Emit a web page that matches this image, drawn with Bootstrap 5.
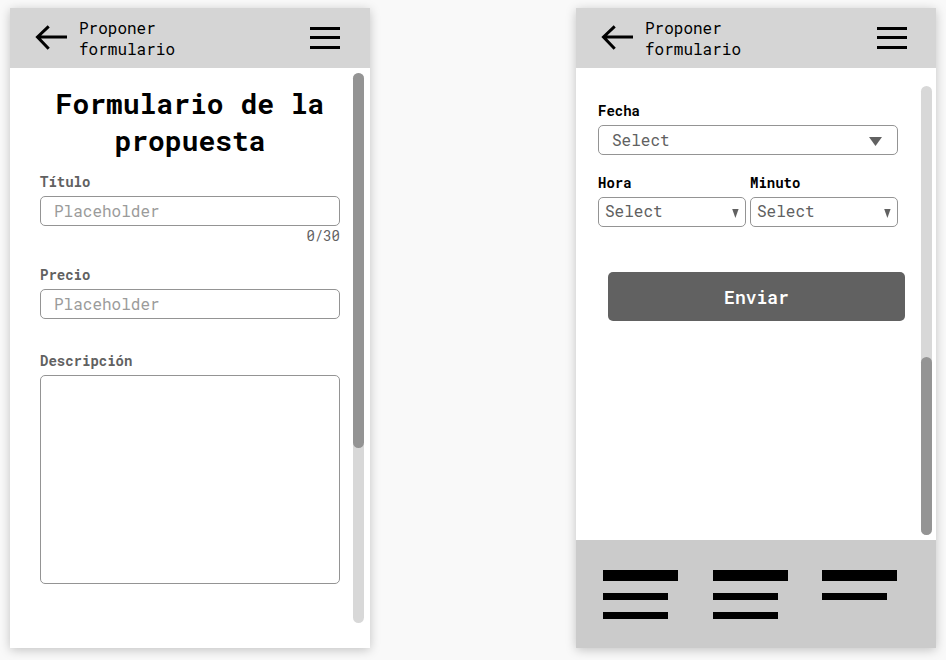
<!DOCTYPE html>
<html lang="es">
<head>
<meta charset="utf-8">
<meta name="viewport" content="width=device-width, initial-scale=1">
<title>Proponer formulario</title>
<link href="https://cdn.jsdelivr.net/npm/bootstrap@5.3.0/dist/css/bootstrap.min.css" rel="stylesheet">
<style>
  body { background: #f9f9f9; color: #000; font-family: "Roboto Mono", "Liberation Mono", monospace; font-size: 16px; }
  .board { padding: 8px 10px 12px; min-height: 100vh; }
  .phone { flex: 0 1 360px; min-width: 0; background: #fff; box-shadow: 0 2px 10px rgba(0, 0, 0, .22); }
  .topbar { background: #d5d5d5; min-height: 60px; padding: 0 30px 0 25px; }
  .topbar p { line-height: 21px; margin-left: 12px; }
  .topbar svg, .topbar button { display: block; }
  .topbar-end { padding-right: 29px; }
  .form-long { padding: 17px 13px 64px 30px; }
  .form-short { padding: 33px 16px 0 22px; }
  h1 { font-size: 28px; line-height: 37px; font-weight: 700; margin-bottom: 13px; }
  .form-label { font-size: 14px; line-height: 20px; font-weight: 700; margin-bottom: 4px; display: block; }
  .form-long .form-label, .count { color: #616161; }
  .count { font-size: 14px; line-height: 20px; margin-bottom: 19px; }
  .form-control, .form-select { border: 1px solid #949494; border-radius: 5px; font-size: 16px; line-height: 20px; padding: 4px 13px; background-color: #fff; }
  .form-control { color: #616161; resize: none; }
  .form-control::placeholder { color: #9b9b9b; opacity: 1; }
  .form-select { color: #616161; height: 30px; padding: 4px 32px 4px 13px;
    background-image: url("data:image/svg+xml,%3Csvg xmlns='http://www.w3.org/2000/svg' viewBox='0 0 13 9'%3E%3Cpath fill='%23616161' d='M0 0h13L6.5 9z'/%3E%3C/svg%3E");
    background-size: 13px 9px; background-position: right 15px top 11px; }
  .select-narrow { padding: 3px 16px 5px 6px;
    background-image: url("data:image/svg+xml,%3Csvg xmlns='http://www.w3.org/2000/svg' viewBox='0 0 7 9'%3E%3Cpath fill='%23616161' d='M.2 0h6.400L3.400 9z'/%3E%3C/svg%3E");
    background-size: 7px 9px; background-position: right 6px top 11px; }
  .field-pair { gap: 4px; }
  .field { margin-bottom: 18px; }
  .fields { padding-right: 7px; }
  .btn-send { background: #616161; color: #fff; font-size: 18px; line-height: 27px; font-weight: 600; padding: 12px 12px 10px; border: 0; border-radius: 5px; margin: 27px 0 0 10px; }
  .btn-send:hover { background: #505050; color: #fff; }
  .track { flex: 0 0 11px; border-radius: 6px; background: #d8d8d8; }
  .thumb { border-radius: 6px; background: #949494; }
  .track-start { margin: 5px 6px 25px 0; }
  .track-start .thumb { height: 68.2%; }
  .track-end { margin: 18px 4px 5px 0; }
  .track-end .thumb { height: 39.6%; }
  .sitemap { background: #cbcbcb; min-height: 108px; padding: 30px 39px 29px 27px; }
  .sitemap-group { gap: 12px; }
  .line-title { width: 75px; height: 11px; background: #000; }
  .line-item { width: 65px; height: 7px; background: #000; }
</style>
</head>
<body>
<main class="board d-flex justify-content-between gap-4">
  <section class="phone d-flex flex-column">
    <header class="topbar d-flex align-items-center">
      <a href="#" aria-label="Volver"><svg width="32" height="26" viewBox="0 0 32 26" fill="none" stroke="#000" stroke-width="3"><path d="M2 12H32M13.700 1.300 2.500 12 13.700 23.700"/></svg></a>
      <p class="mb-0 flex-fill">Proponer<br>formulario</p>
      <button type="button" class="border-0 bg-transparent p-0" aria-label="Menú"><svg width="30" height="22" viewBox="0 0 30 22"><path d="M0 0h30v3H0zM0 9h30v3H0zM0 19h30v3H0z"/></svg></button>
    </header>
    <div class="d-flex flex-fill">
      <form class="form-long d-flex flex-column flex-fill">
        <h1 class="text-center">Formulario de la propuesta</h1>
        <label class="form-label" for="titulo">Título</label>
        <input class="form-control" id="titulo" type="text" maxlength="30" placeholder="Placeholder">
        <div class="count text-end">0/30</div>
        <label class="form-label" for="precio">Precio</label>
        <input class="form-control mb-3" id="precio" type="text" placeholder="Placeholder">
        <label class="form-label mt-3" for="descripcion">Descripción</label>
        <textarea class="form-control flex-fill" id="descripcion"></textarea>
      </form>
      <div class="track track-start"><div class="thumb"></div></div>
    </div>
  </section>

  <section class="phone d-flex flex-column">
    <header class="topbar topbar-end d-flex align-items-center">
      <a href="#" aria-label="Volver"><svg width="32" height="26" viewBox="0 0 32 26" fill="none" stroke="#000" stroke-width="3"><path d="M2 12H32M13.700 1.300 2.500 12 13.700 23.700"/></svg></a>
      <p class="mb-0 flex-fill">Proponer<br>formulario</p>
      <button type="button" class="border-0 bg-transparent p-0" aria-label="Menú"><svg width="30" height="22" viewBox="0 0 30 22"><path d="M0 0h30v3H0zM0 9h30v3H0zM0 19h30v3H0z"/></svg></button>
    </header>
    <div class="d-flex flex-fill">
      <form class="form-short d-flex flex-column flex-fill">
        <div class="fields">
          <div class="field">
            <label class="form-label" for="fecha">Fecha</label>
            <select class="form-select" id="fecha"><option>Select</option></select>
          </div>
          <div class="field field-pair d-flex">
            <div class="flex-fill">
              <label class="form-label" for="hora">Hora</label>
              <select class="form-select select-narrow" id="hora"><option>Select</option></select>
            </div>
            <div class="flex-fill">
              <label class="form-label" for="minuto">Minuto</label>
              <select class="form-select select-narrow" id="minuto"><option>Select</option></select>
            </div>
          </div>
        </div>
        <button type="submit" class="btn btn-send">Enviar</button>
      </form>
      <div class="track track-end d-flex flex-column justify-content-end"><div class="thumb"></div></div>
    </div>
    <footer class="sitemap d-flex justify-content-between">
      <div class="sitemap-group d-flex flex-column"><div class="line-title"></div><div class="line-item"></div><div class="line-item"></div></div>
      <div class="sitemap-group d-flex flex-column"><div class="line-title"></div><div class="line-item"></div><div class="line-item"></div></div>
      <div class="sitemap-group d-flex flex-column"><div class="line-title"></div><div class="line-item"></div></div>
    </footer>
  </section>
</main>
<script src="https://cdn.jsdelivr.net/npm/bootstrap@5.3.0/dist/js/bootstrap.bundle.min.js"></script>
</body>
</html>
